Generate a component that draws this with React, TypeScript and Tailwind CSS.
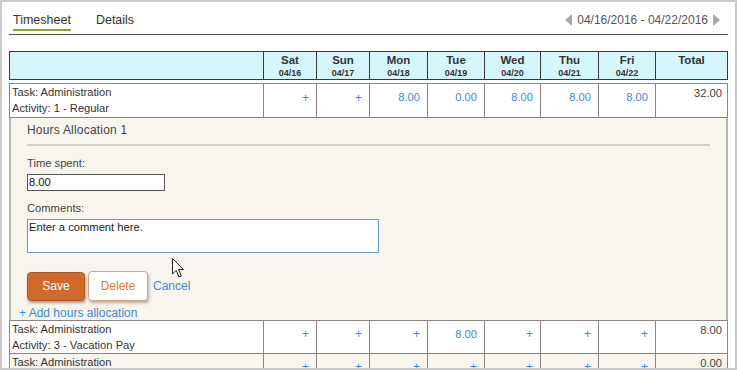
import React from 'react';

const DAYS = [
  { name: 'Sat', date: '04/16' },
  { name: 'Sun', date: '04/17' },
  { name: 'Mon', date: '04/18' },
  { name: 'Tue', date: '04/19' },
  { name: 'Wed', date: '04/20' },
  { name: 'Thu', date: '04/21' },
  { name: 'Fri', date: '04/22' },
];

const ROWS = [
  { task: 'Administration', activity: '1 - Regular', hours: ['', '', '8.00', '0.00', '8.00', '8.00', '8.00'], total: '32.00' },
  { task: 'Administration', activity: '3 - Vacation Pay', hours: ['', '', '', '8.00', '', '', ''], total: '8.00' },
  { task: 'Administration', activity: '', hours: ['', '', '', '', '', '', ''], total: '0.00' },
];

const GRID = 'grid grid-cols-[254px_53px_53px_58px_57px_56px_58px_57px_1fr]';

function Row({ row, shaded, tall }: { row: (typeof ROWS)[number]; shaded?: boolean; tall?: boolean }) {
  return (
    <div className={`${GRID} ${tall ? 'h-[34px]' : 'h-[33px]'} border-x border-b border-[#8a8580] ${shaded ? 'bg-[#f7f5ee]' : 'bg-white'}`}>
      <div className="border-r border-[#8a8580] pl-[2px] text-[11.2px] leading-[16px] text-[#333]">
        <div>Task: {row.task}</div>
        {row.activity && <div>Activity: {row.activity}</div>}
      </div>
      {row.hours.map((h, i) => (
        <div key={i} className="flex items-center justify-end border-r border-[#8a8580] pr-[7px] pb-[6px] text-[11.2px] text-[#3d8bd6]">
          {h || <span className="text-[12px]">+</span>}
        </div>
      ))}
      <div className="pr-[5px] pt-[1px] text-right text-[11.2px] leading-[16px] text-[#444]">{row.total}</div>
    </div>
  );
}

export default function App() {
  return (
    <div className="relative h-[370px] w-[737px] overflow-hidden border-2 border-[#cacaca] bg-white font-['Liberation_Sans',Arial,sans-serif]">
      <div className="px-[7px]">
        {/* Tabs + week picker */}
        <div className="flex h-[33px] items-start justify-between border-b border-[#555] pt-[11px]">
          <div className="flex gap-[25px] pl-[4px] text-[12.5px] leading-[15px] text-[#333]">
            <span className="border-b-2 border-[#8da62e] pb-[1px]">Timesheet</span>
            <span>Details</span>
          </div>
          <div className="flex items-center gap-[5px] pr-[8px] text-[12px] leading-[14px] text-[#555]">
            <svg width="7" height="12" viewBox="0 0 7 12"><path d="M7 0 L0 6 L7 12 Z" fill="#a9a9a9" /></svg>
            <span>04/16/2016 - 04/22/2016</span>
            <svg width="7" height="12" viewBox="0 0 7 12"><path d="M0 0 L7 6 L0 12 Z" fill="#a9a9a9" /></svg>
          </div>
        </div>

        {/* Table header */}
        <div className={`${GRID} mt-[16px] h-[29px] border border-[#3a3a3a] bg-[#d6f6fd] text-[#333]`}>
          <div className="border-r border-[#3a3a3a]" />
          {DAYS.map((d) => (
            <div key={d.name} className="flex flex-col items-center border-r border-[#3a3a3a] pt-[1px]">
              <span className="text-[11.5px] font-bold leading-[14px]">{d.name}</span>
              <span className="text-[9px] font-bold leading-[12px]">{d.date}</span>
            </div>
          ))}
          <div className="pt-[1px] text-center text-[11.5px] font-bold leading-[14px]">Total</div>
        </div>

        {/* Body */}
        <div className="mt-[3px] border-t border-[#8a8580]">
          <Row row={ROWS[0]} tall />

          <div className="h-[202px] border-x-2 border-[#b8b5ae] bg-[#f7f5ee] pt-[5px] text-[#444]">
            <div className="pl-[16px] pr-[16px]">
              <div className="text-[12px] leading-[15px] tracking-[0.2px]">Hours Allocation 1</div>
              <div className="mt-[6px] h-[2px] bg-[#d3d0c7]" />
              <div className="mt-[9px] text-[11.2px] leading-[16px]">Time spent:</div>
              <div className="mt-[3px] h-[17px] w-[138px] border border-[#555] bg-white pl-[1px] text-[11.2px] leading-[15px] text-[#111]">
                8.00
              </div>
              <div className="mt-[9px] text-[11.2px] leading-[16px]">Comments:</div>
              <div className="mt-[3px] h-[34px] w-[352px] border border-[#7393cc] bg-white pl-[1px] text-[11.2px] leading-[14px] text-[#222]">
                Enter a comment here.
              </div>
              <div className="mt-[18px] flex items-center">
                <button className="h-[29px] w-[58px] rounded-[4px] border border-[#b45823] bg-[#d06a2c] text-[12px] text-white shadow-[1px_2px_3px_rgba(0,0,0,0.35)]">
                  Save
                </button>
                <button className="ml-[3px] h-[30px] w-[60px] rounded-[4px] border border-[#dca679] bg-white text-[12px] text-[#d27d3d] shadow-[1px_2px_3px_rgba(0,0,0,0.3)]">
                  Delete
                </button>
                <span className="ml-[5px] text-[12px] text-[#3d8bd6]">Cancel</span>
              </div>
            </div>
            <div className="mt-[4px] pl-[8px] text-[12px] leading-[16px] text-[#3d8bd6]">+ Add hours allocation</div>
          </div>

          <div className="border-t border-[#8a8580]">
            <Row row={ROWS[1]} />
            <Row row={ROWS[2]} shaded />
          </div>
        </div>
      </div>

      {/* mouse pointer */}
      <svg className="absolute left-[170px] top-[256px]" width="13" height="21" viewBox="0 0 13 21">
        <path d="M0.5 0.5 L0.5 16 L4.2 12.4 L7 19 L9.3 18 L6.6 11.6 L11.5 11.6 Z" fill="#fff" stroke="#222" strokeWidth="1" />
      </svg>
    </div>
  );
}
